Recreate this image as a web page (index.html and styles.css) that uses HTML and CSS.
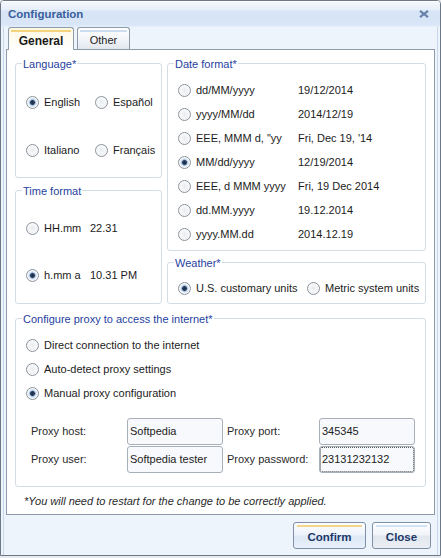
FILE: index.html
```html
<!DOCTYPE html>
<html>
<head>
<meta charset="utf-8">
<link rel="stylesheet" href="styles.css">
</head>
<body>
<div class="window">
  <div class="titlebar">
    <span class="title">Configuration</span>
    <svg class="close-x" width="10" height="8" viewBox="0 0 10 8"><path d="M1 0.8 L9 7.2 M9 0.8 L1 7.2" stroke="#6a84ad" stroke-width="2.2" fill="none"/></svg>
  </div>
  <div class="client">
    <div class="frame">
      <div class="tabs">
        <div class="tab active">General</div>
        <div class="tab">Other</div>
      </div>
      <div class="panel">
        <div class="top">
          <div class="col col-left">
            <div class="group lang">
              <span class="gtitle">Language*</span>
              <div class="lang-grid">
                <div class="opt"><span class="radio on"></span><span>English</span></div>
                <div class="opt"><span class="radio"></span><span>Español</span></div>
                <div class="opt"><span class="radio"></span><span>Italiano</span></div>
                <div class="opt"><span class="radio"></span><span>Français</span></div>
              </div>
            </div>
            <div class="group time">
              <span class="gtitle">Time format</span>
              <div class="opt"><span class="radio"></span><span class="tlbl">HH.mm</span><span>22.31</span></div>
              <div class="opt"><span class="radio on"></span><span class="tlbl">h.mm a</span><span>10.31 PM</span></div>
            </div>
          </div>
          <div class="col col-right">
            <div class="group date">
              <span class="gtitle">Date format*</span>
              <div class="opt"><span class="radio"></span><span class="dlbl">dd/MM/yyyy</span><span>19/12/2014</span></div>
              <div class="opt"><span class="radio"></span><span class="dlbl">yyyy/MM/dd</span><span>2014/12/19</span></div>
              <div class="opt"><span class="radio"></span><span class="dlbl">EEE, MMM d, "yy</span><span>Fri, Dec 19, '14</span></div>
              <div class="opt"><span class="radio on"></span><span class="dlbl">MM/dd/yyyy</span><span>12/19/2014</span></div>
              <div class="opt"><span class="radio"></span><span class="dlbl">EEE, d MMM yyyy</span><span>Fri, 19 Dec 2014</span></div>
              <div class="opt"><span class="radio"></span><span class="dlbl">dd.MM.yyyy</span><span>19.12.2014</span></div>
              <div class="opt"><span class="radio"></span><span class="dlbl">yyyy.MM.dd</span><span>2014.12.19</span></div>
            </div>
            <div class="group weather">
              <span class="gtitle">Weather*</span>
              <div class="weather-row">
                <div class="opt"><span class="radio on"></span><span>U.S. customary units</span></div>
                <div class="opt"><span class="radio"></span><span>Metric system units</span></div>
              </div>
            </div>
          </div>
        </div>
        <div class="group proxy">
          <span class="gtitle">Configure proxy to access the internet*</span>
          <div class="opt"><span class="radio"></span><span>Direct connection to the internet</span></div>
          <div class="opt"><span class="radio"></span><span>Auto-detect proxy settings</span></div>
          <div class="opt"><span class="radio on"></span><span>Manual proxy configuration</span></div>
          <div class="proxy-grid">
            <span class="plbl">Proxy host:</span>
            <span class="input">Softpedia</span>
            <span class="plbl plbl2">Proxy port:</span>
            <span class="input">345345</span>
            <span class="plbl">Proxy user:</span>
            <span class="input">Softpedia tester</span>
            <span class="plbl plbl2">Proxy password:</span>
            <span class="input focused">23131232132</span>
          </div>
        </div>
        <div class="note">*You will need to restart for the change to be correctly applied.</div>
      </div>
      <div class="buttons">
        <div class="btn btn-default">Confirm</div>
        <div class="btn btn-close">Close</div>
      </div>
    </div>
  </div>
</div>
</body>
</html>
```
FILE: styles.css
```css
html, body {
  margin: 0;
  padding: 0;
}
body {
  background: #e6eaef;
  font-family: "Liberation Sans", Arial, sans-serif;
  font-size: 11px;
  color: #1c1c1c;
}
.window {
  width: 441px;
  height: 556px;
  box-sizing: border-box;
  border: 1px solid #6c7886;
  border-radius: 4px 4px 0 0;
  background: #eef4fc;
  display: flex;
  flex-direction: column;
  overflow: hidden;
}
.titlebar {
  height: 26px;
  flex: none;
  display: flex;
  align-items: center;
  justify-content: space-between;
  padding: 0 11px 0 7px;
  background: linear-gradient(to bottom, #f4f8fd 0%, #e8f0fa 30%, #d6e4f6 42%, #d8e6f7 90%, #e6eefa 100%);
  box-shadow: inset 0 1px 0 #ffffff;
}
.title {
  font-weight: bold;
  font-size: 11.5px;
  color: #3a5e9c;
}
.close-x {
  display: block;
}
.client {
  flex: 1;
  padding: 0 2px;
  display: flex;
}
.frame {
  flex: 1;
  border-left: 1px solid #c7d7ec;
  border-right: 1px solid #c7d7ec;
  padding: 0 2px;
  display: flex;
  flex-direction: column;
}
.tabs {
  height: 22px;
  flex: none;
  display: flex;
  align-items: flex-start;
  gap: 3px;
  padding-left: 2px;
}
.tab {
  box-sizing: border-box;
  height: 22px;
  border: 1px solid #8e9bab;
  border-bottom: none;
  border-radius: 3px 3px 0 0;
  display: flex;
  align-items: center;
  justify-content: center;
  padding-top: 3px;
  width: 53px;
  font-size: 11px;
  color: #222;
  background:
    linear-gradient(#cddcef, #cddcef) 2px 2px / calc(100% - 4px) 2px no-repeat,
    linear-gradient(to bottom, #ffffff 0%, #f4f6f9 45%, #e2e7ee 100%);
}
.tab.active {
  width: 66px;
  height: 23px;
  position: relative;
  z-index: 1;
  font-weight: bold;
  font-size: 12px;
  color: #1a1a1a;
  background:
    linear-gradient(#f5d27c, #f5d27c) 2px 2px / calc(100% - 4px) 2px no-repeat,
    linear-gradient(to bottom, #fff8e2 0%, #fffcf2 50%, #ffffff 100%);
}
.panel {
  box-sizing: border-box;
  height: 466px;
  flex: none;
  border: 1px solid #8e9bab;
  background: #ffffff;
  padding: 13px 8px 0 8px;
  display: flex;
  flex-direction: column;
}
.top {
  display: flex;
  gap: 5px;
  height: 241px;
  flex: none;
}
.col {
  display: flex;
  flex-direction: column;
}
.col-left {
  width: 147px;
  gap: 12px;
}
.col-right {
  width: 259px;
  gap: 11px;
}
.group {
  position: relative;
  box-sizing: border-box;
  border: 1px solid #d4dce4;
  border-radius: 3px;
  padding-left: 10px;
}
.gtitle {
  position: absolute;
  top: -7px;
  left: 6px;
  padding: 0 1px;
  background: #ffffff;
  color: #1f3f9f;
  line-height: 14px;
  white-space: nowrap;
}
.lang {
  height: 115px;
  padding-top: 26px;
}
.lang-grid {
  display: grid;
  grid-template-columns: 69px auto;
  grid-auto-rows: 24px;
  row-gap: 24px;
}
.time {
  height: 114px;
  padding-top: 25px;
  display: flex;
  flex-direction: column;
  gap: 23px;
}
.date {
  height: 188px;
  padding-top: 14px;
}
.weather {
  height: 42px;
  padding-top: 13px;
}
.weather-row {
  display: grid;
  grid-template-columns: 129px auto;
}
.opt {
  display: flex;
  align-items: center;
  height: 24px;
  white-space: nowrap;
}
.radio {
  flex: none;
  width: 13px;
  height: 13px;
  box-sizing: border-box;
  border-radius: 50%;
  border: 1px solid #8b949e;
  margin-right: 5px;
  background: radial-gradient(circle at 50% 45%, #e6e8eb 0, #f6f7f8 40%, #dcdfe3 100%);
  box-shadow: inset 0 0 0 1px rgba(255,255,255,0.7);
}
.radio.on {
  background: radial-gradient(circle at 50% 50%, #1b2a40 0, #2a3e5c 2px, #7d9cc4 2.6px, #cfe0f4 3.4px, #e4edf8 4.3px, #eceef1 4.8px, #dcdfe3 100%);
}
.tlbl {
  width: 46px;
}
.dlbl {
  width: 102px;
}
.proxy {
  margin-top: 14px;
  padding-top: 14px;
  padding-bottom: 13px;
}
.proxy-grid {
  margin-top: 12px;
  margin-left: 5px;
  display: grid;
  grid-template-columns: 96px 96px 96px 96px;
  grid-auto-rows: 28px;
  align-items: center;
}
.plbl {
  color: #2a2a2a;
}
.plbl2 {
  padding-left: 4px;
}
.input {
  box-sizing: border-box;
  height: 27px;
  border: 1px solid #a7afb9;
  border-radius: 3px;
  background: #f7f9fc;
  padding-left: 2px;
  display: flex;
  align-items: center;
  color: #222;
  white-space: nowrap;
}
.input.focused {
  outline: 1px dotted #555;
  outline-offset: -2px;
}
.note {
  flex: 1;
  display: flex;
  align-items: center;
  padding-left: 9px;
  font-style: italic;
  color: #2a2a2a;
}
.buttons {
  flex: none;
  display: flex;
  justify-content: flex-end;
  gap: 6px;
  margin-top: 7px;
  padding-right: 4px;
}
.btn {
  box-sizing: border-box;
  height: 27px;
  border: 1px solid #7f8fa5;
  border-radius: 3px;
  display: flex;
  align-items: center;
  justify-content: center;
  padding-top: 2px;
  font-weight: bold;
  font-size: 11.5px;
  color: #1b3769;
}
.btn-default {
  width: 73px;
  background:
    linear-gradient(#f3d68c, #f3d68c) 3px 2px / calc(100% - 6px) 2px no-repeat,
    linear-gradient(to bottom, #fdfeff 0%, #eef4fb 45%, #dde8f6 55%, #e8f0fa 100%);
}
.btn-close {
  width: 59px;
  background:
    linear-gradient(#d3e2f4, #d3e2f4) 3px 2px / calc(100% - 6px) 2px no-repeat,
    linear-gradient(to bottom, #fdfeff 0%, #f2f5f9 45%, #e2e7ee 55%, #ebeff4 100%);
}
```
